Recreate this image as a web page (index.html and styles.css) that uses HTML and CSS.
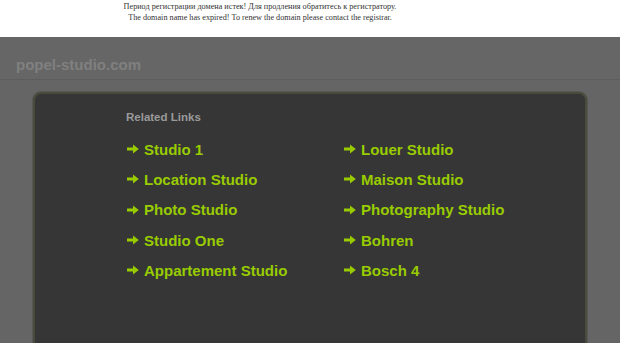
FILE: index.html
```html
<!DOCTYPE html>
<html lang="en">
<head>
  <meta charset="UTF-8">
  <title>popel-studio.com</title>
  <link rel="stylesheet" href="styles.css">
</head>
<body>
  <div class="notice">
    <div>Период регистрации домена истек! Для продления обратитесь к регистратору.</div>
    <div>The domain name has expired! To renew the domain please contact the registrar.</div>
  </div>

  <div class="header">popel-studio.com</div>

  <div class="content">
    <div class="box">
      <div class="related">Related Links</div>
      <div class="links">
        <a class="link" href="#"><svg class="arrow" viewBox="0 0 12 10"><path d="M0 3.4h6V0.6L11.8 5 6 9.4V6.6H0z"/></svg>Studio 1</a>
        <a class="link" href="#"><svg class="arrow" viewBox="0 0 12 10"><path d="M0 3.4h6V0.6L11.8 5 6 9.4V6.6H0z"/></svg>Louer Studio</a>
        <a class="link" href="#"><svg class="arrow" viewBox="0 0 12 10"><path d="M0 3.4h6V0.6L11.8 5 6 9.4V6.6H0z"/></svg>Location Studio</a>
        <a class="link" href="#"><svg class="arrow" viewBox="0 0 12 10"><path d="M0 3.4h6V0.6L11.8 5 6 9.4V6.6H0z"/></svg>Maison Studio</a>
        <a class="link" href="#"><svg class="arrow" viewBox="0 0 12 10"><path d="M0 3.4h6V0.6L11.8 5 6 9.4V6.6H0z"/></svg>Photo Studio</a>
        <a class="link" href="#"><svg class="arrow" viewBox="0 0 12 10"><path d="M0 3.4h6V0.6L11.8 5 6 9.4V6.6H0z"/></svg>Photography Studio</a>
        <a class="link" href="#"><svg class="arrow" viewBox="0 0 12 10"><path d="M0 3.4h6V0.6L11.8 5 6 9.4V6.6H0z"/></svg>Studio One</a>
        <a class="link" href="#"><svg class="arrow" viewBox="0 0 12 10"><path d="M0 3.4h6V0.6L11.8 5 6 9.4V6.6H0z"/></svg>Bohren</a>
        <a class="link" href="#"><svg class="arrow" viewBox="0 0 12 10"><path d="M0 3.4h6V0.6L11.8 5 6 9.4V6.6H0z"/></svg>Appartement Studio</a>
        <a class="link" href="#"><svg class="arrow" viewBox="0 0 12 10"><path d="M0 3.4h6V0.6L11.8 5 6 9.4V6.6H0z"/></svg>Bosch 4</a>
      </div>
    </div>
  </div>
</body>
</html>
```

FILE: styles.css
```css
html, body {
  margin: 0;
  padding: 0;
  overflow: hidden;
  background: #656565;
  font-family: 'Liberation Sans', Arial, sans-serif;
}
.notice {
  height: 36px;
  padding: 1px 100px 0 0;
  background: #fff;
  color: #333;
  font-family: 'Liberation Serif', 'Times New Roman', serif;
  font-size: 8.2px;
  line-height: 11px;
  text-align: center;
}
.header {
  height: 42px;
  padding-left: 16px;
  background: #666;
  border-bottom: 1px solid #5d5d5d;
  color: #808080;
  font-size: 15px;
  font-weight: bold;
  line-height: 56px;
}
.content {
  padding: 12px 33px 0;
}
.box {
  height: 300px;
  padding: 16px 0 0 91px;
  background: #363636;
  border: 2px solid #4a4b3a;
  border-radius: 8px;
  box-shadow: 0 0 0 1px #585858;
}
.related {
  color: #9a9a9a;
  font-size: 11.5px;
  font-weight: bold;
  line-height: 14px;
}
.links {
  display: grid;
  grid-template-columns: 217px 217px;
  margin-top: 10px;
  padding-left: 1px;
}
.link {
  display: flex;
  align-items: center;
  gap: 5px;
  height: 30.3px;
  color: #9c0;
  font-size: 15px;
  font-weight: bold;
  text-decoration: none;
}
.arrow {
  width: 12px;
  height: 10px;
  fill: #9c0;
}
```
